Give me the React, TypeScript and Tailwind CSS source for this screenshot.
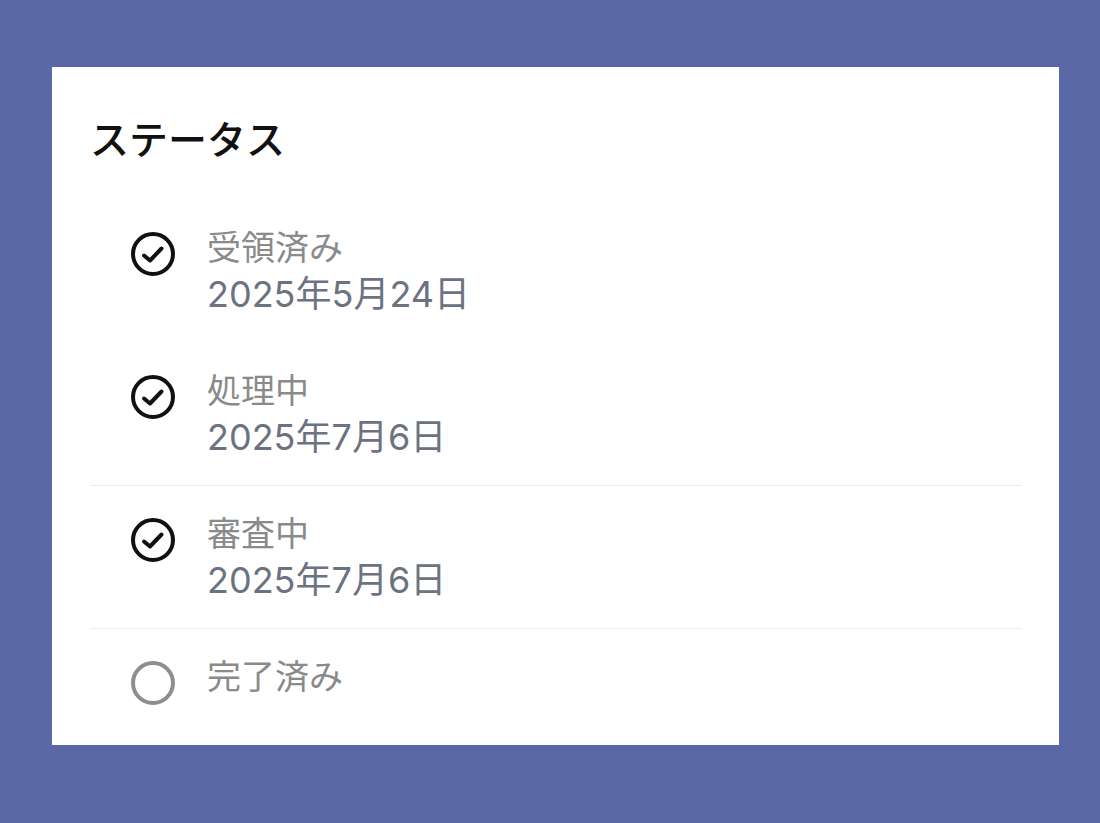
import React from "react";

const CheckIcon = () => (
  <svg width="46" height="46" viewBox="0 0 46 46" fill="none" className="shrink-0">
    <circle cx="23" cy="23" r="20" stroke="#111111" strokeWidth="4" />
    <path d="M14 24.5 L20 29.5 L31.5 17.5" stroke="#111111" strokeWidth="4" strokeLinecap="round" strokeLinejoin="round" />
  </svg>
);

const EmptyIcon = () => (
  <svg width="46" height="46" viewBox="0 0 46 46" fill="none" className="shrink-0">
    <circle cx="23" cy="23" r="20" stroke="#8e8e8e" strokeWidth="4" />
  </svg>
);

type Item = { label: string; date?: string; done: boolean; border: boolean };

const items: Item[] = [
  { label: "受領済み", date: "2025年5月24日", done: true, border: false },
  { label: "処理中", date: "2025年7月6日", done: true, border: true },
  { label: "審査中", date: "2025年7月6日", done: true, border: true },
  { label: "完了済み", done: false, border: false },
];

export default function App() {
  return (
    <div
      className="w-[1100px] h-[823px] bg-[#5b68a7] pl-[52px] pt-[67px]"
      style={{ fontFamily: '"Noto Sans CJK JP", "Noto Sans", sans-serif' }}
    >
      <div className="w-[1007px] h-[678px] bg-white pl-[38px] pr-[37px] pt-[46px]">
        <h1 className="text-[39px] leading-[48px] font-medium text-[#111111]">ステータス</h1>
        <div className="mt-[39px]">
          {items.map((it, i) => (
            <div
              key={i}
              className={`flex pl-[40px] pt-[22px] pb-[24px] border-b ${it.border ? "border-[#ebebeb]" : "border-transparent"}`}
            >
              <div className="mt-[9px]">{it.done ? <CheckIcon /> : <EmptyIcon />}</div>
              <div className="ml-[31px] flex flex-col">
                <span className="text-[34px] leading-[48px] text-[#8a8a8a]">{it.label}</span>
                {it.date && (
                  <span
                    className="text-[36px] leading-[48px] text-[#6b7280]"
                    style={{ fontFamily: 'Inter, "Noto Sans CJK JP", sans-serif' }}
                  >
                    {it.date}
                  </span>
                )}
              </div>
            </div>
          ))}
        </div>
      </div>
    </div>
  );
}
